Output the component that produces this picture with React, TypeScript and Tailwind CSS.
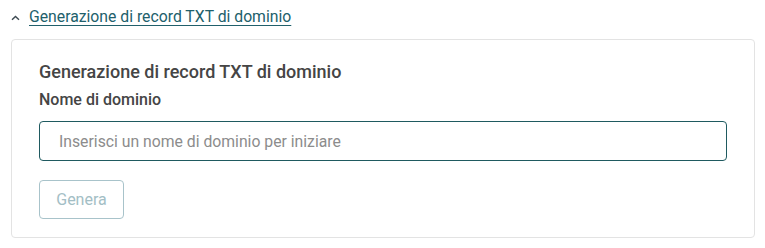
import React from "react";

export default function App() {
  return (
    <div className="w-[765px] h-[248px] bg-white" style={{ fontFamily: "Roboto, 'Liberation Sans', sans-serif" }}>
      <div className="pl-[11px] pr-[10px] pt-[7px]">
        <button className="flex items-center gap-[9px] h-[20px] text-[15.75px] text-[#21606b]">
          <svg width="9" height="6" viewBox="0 0 9 6" className="mt-[2px]">
            <path d="M1 4.8 L4.5 1.4 L8 4.8" fill="none" stroke="#3d4a52" strokeWidth="1.4" />
          </svg>
          <span className="underline underline-offset-[3px] decoration-[1px]">Generazione di record TXT di dominio</span>
        </button>
        <div className="mt-[12px] border border-[#e3e3e3] rounded-[4px] pl-[27px] pr-[27px] pt-[20px] pb-[18px]">
          <h2 className="text-[18px] leading-[24px] font-medium text-[#454545]">Generazione di record TXT di dominio</h2>
          <label className="block mt-[6px] text-[16px] leading-[20px] font-medium text-[#454545]">Nome di dominio</label>
          <input
            className="mt-[11px] w-full h-[40px] border border-[#1f5a60] rounded-[4px] px-[19px] text-[15.75px] text-[#333] placeholder:text-[#8c8c8c] outline-none"
            placeholder="Inserisci un nome di dominio per iniziare"
          />
          <button
            disabled
            className="mt-[19px] h-[39px] w-[85px] border border-[#a8c3ca] rounded-[4px] text-[16px] text-[#a3bec5] bg-white"
          >
            Genera
          </button>
        </div>
      </div>
    </div>
  );
}
